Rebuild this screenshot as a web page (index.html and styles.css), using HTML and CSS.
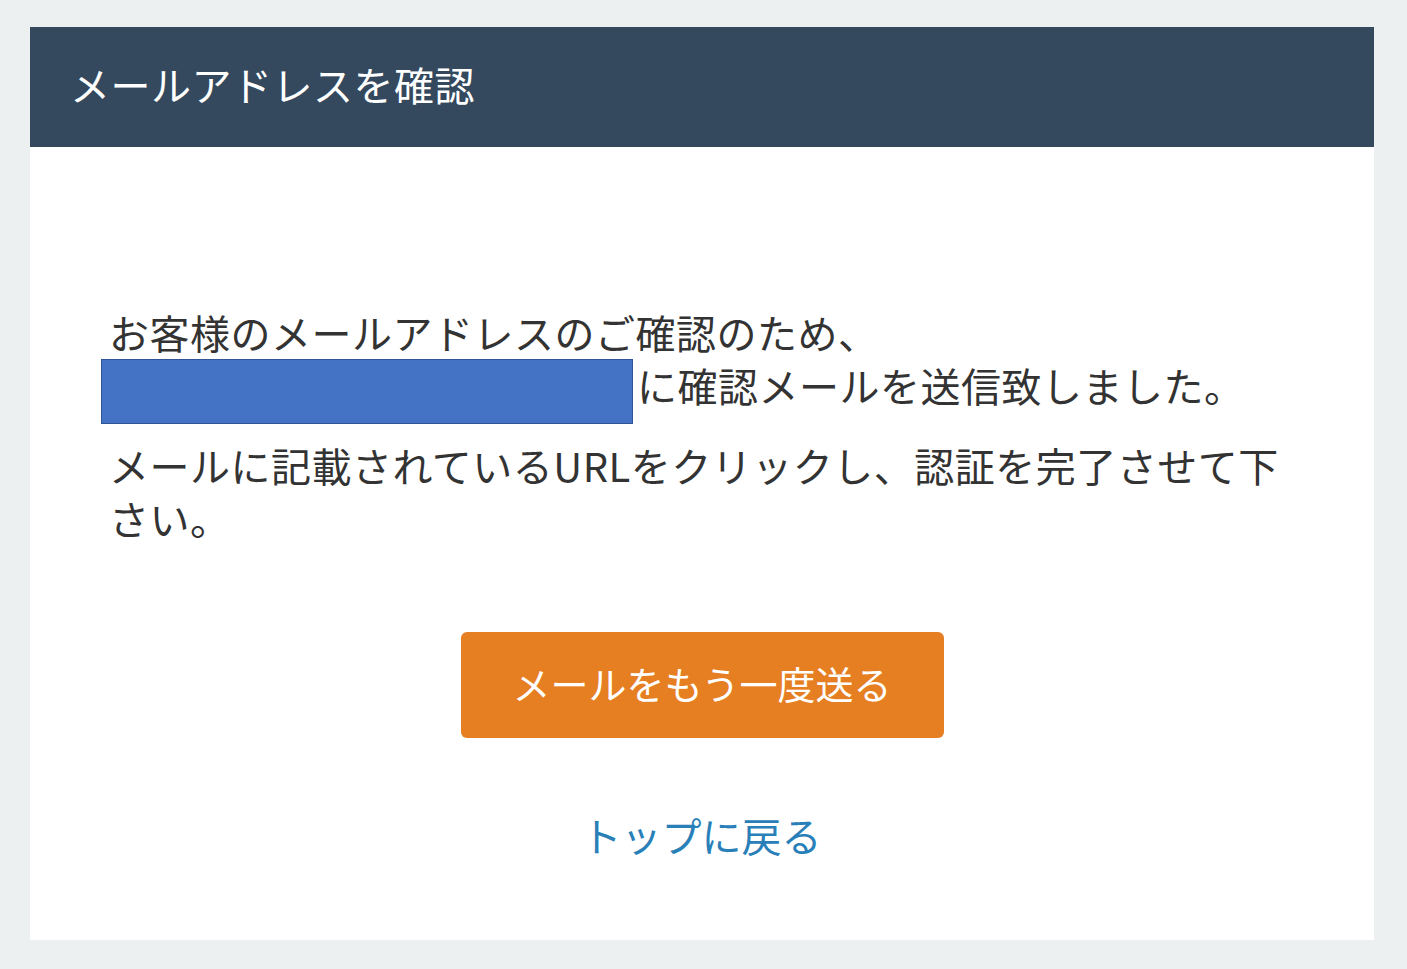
FILE: index.html
```html
<!DOCTYPE html>
<html lang="ja">
<head>
<meta charset="utf-8">
<title>メールアドレスを確認</title>
<link rel="stylesheet" href="styles.css">
</head>
<body>
<div class="card">
  <div class="card-header">メールアドレスを確認</div>
  <div class="card-body">
    <p class="msg">お客様のメールアドレスのご確認のため、<br><span class="masked"></span>に確認メールを送信致しました。</p>
    <p class="msg">メールに記載されているURLをクリックし、認証を完了させて下<br>さい。</p>
    <div class="actions">
      <a class="btn" href="#">メールをもう一度送る</a>
      <a class="back" href="#">トップに戻る</a>
    </div>
  </div>
</div>
</body>
</html>
```
FILE: styles.css
```css
html, body {
  margin: 0;
  padding: 0;
}
body {
  background: #ecf0f1;
  padding: 27px 33px 29px 30px;
  font-family: "Noto Sans CJK JP", "Noto Sans", sans-serif;
  box-sizing: border-box;
  height: 969px;
}
.card {
  background: #ffffff;
  height: 913px;
  display: flex;
  flex-direction: column;
}
.card-header {
  background: #34495e;
  color: #ffffff;
  height: 120px;
  box-sizing: border-box;
  padding: 0 0 6px 40px;
  display: flex;
  align-items: center;
  font-size: 40px;
  letter-spacing: 0.5px;
  flex: none;
}
.card-body {
  padding: 159px 80px 0 79px;
  display: flex;
  flex-direction: column;
}
.msg {
  margin: 0 0 27px 0;
  font-size: 40px;
  line-height: 53px;
  letter-spacing: 0.5px;
  color: #333333;
}
.masked {
  display: inline-block;
  width: 530px;
  height: 63px;
  background: #4472c4;
  border: 1px solid #2f5597;
  margin: -6px 4px -12px -8px;
  vertical-align: -10px;
}
.actions {
  display: flex;
  flex-direction: column;
  align-items: center;
  padding-top: 60px;
}
.btn {
  display: flex;
  align-items: center;
  justify-content: center;
  width: 483px;
  height: 106px;
  box-sizing: border-box;
  padding-bottom: 5px;
  margin-left: 1px;
  background: #e67e22;
  color: #ffffff;
  border-radius: 6px;
  font-size: 38px;
  text-decoration: none;
}
.back {
  margin-top: 71px;
  font-size: 40px;
  line-height: 53px;
  color: #2980b9;
  text-decoration: none;
}
```
